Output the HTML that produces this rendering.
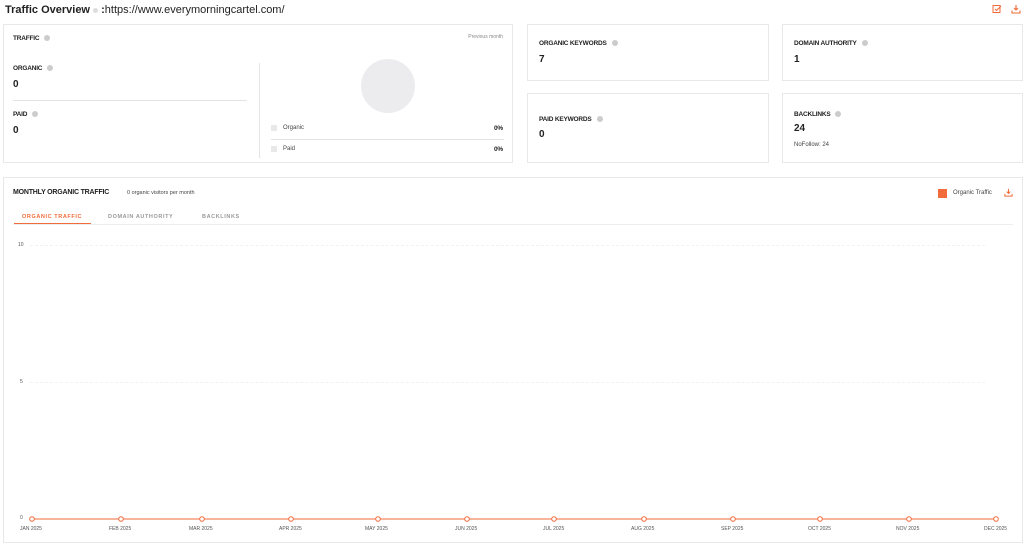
<!DOCTYPE html>
<html><head><style>
*{box-sizing:border-box;margin:0;padding:0}
body{width:1024px;height:551px;background:#fff;font-family:"Liberation Sans",sans-serif;color:#222;position:relative;overflow:hidden}
.a{position:absolute}
.card{position:absolute;border:1px solid #e8e8e8;background:#fff}
.lbl{position:absolute;font-size:6.5px;font-weight:bold;letter-spacing:-0.2px;color:#222}
.q{display:inline-block;width:6px;height:6px;border-radius:50%;background:#ccc;margin-left:5px;vertical-align:middle}
.val{position:absolute;font-size:10px;font-weight:bold}
.sm{position:absolute;font-size:6px;color:#444}
.ax{position:absolute;font-size:5px;color:#555}
</style></head><body>
<div class="a" style="left:5px;top:4px;font-size:11px"><b>Traffic Overview</b> <span style="display:inline-block;width:5px;height:5px;border-radius:50%;background:#ddd;vertical-align:middle"></span> <b>:</b>https://www.everymorningcartel.com/</div>
<svg class="a" style="left:992px;top:4px" width="10" height="10" viewBox="0 0 10 10" fill="none" stroke="#f26b3a" stroke-width="1"><rect x="1" y="1.5" width="7" height="7"/><path d="M3 5l1.5 1.5L9 2"/></svg>
<svg class="a" style="left:1011px;top:4px" width="10" height="10" viewBox="0 0 10 10" fill="none" stroke="#f26b3a" stroke-width="1.1"><path d="M5 1v5M3 4l2 2 2-2M1 6.5v2.5h8V6.5"/></svg>

<div class="card" style="left:3px;top:24px;width:510px;height:139px">
 <div class="lbl" style="left:9px;top:10px">TRAFFIC<span class="q"></span></div>
 <div class="sm" style="right:9px;top:9px;font-size:5px;color:#888">Previous month</div>
 <div class="lbl" style="left:9px;top:40px">ORGANIC<span class="q"></span></div>
 <div class="val" style="left:9px;top:54px">0</div>
 <div class="a" style="left:9px;top:75px;width:234px;border-top:1px solid #e4e4e4"></div>
 <div class="lbl" style="left:9px;top:86px">PAID<span class="q"></span></div>
 <div class="val" style="left:9px;top:100px">0</div>
 <div class="a" style="left:255px;top:38px;height:95px;border-left:1px solid #e4e4e4"></div>
 <div class="a" style="left:357px;top:34px;width:54px;height:54px;border-radius:50%;background:#ececee"></div>
 <div class="a" style="left:267px;top:100px;width:6px;height:6px;background:#e8e8e8"></div>
 <div class="sm" style="left:279px;top:100px">Organic</div>
 <div class="lbl" style="right:9px;top:100px">0%</div>
 <div class="a" style="left:267px;top:114px;width:233px;border-top:1px solid #e4e4e4"></div>
 <div class="a" style="left:267px;top:121px;width:6px;height:6px;background:#e8e8e8"></div>
 <div class="sm" style="left:279px;top:121px">Paid</div>
 <div class="lbl" style="right:9px;top:121px">0%</div>
</div>

<div class="card" style="left:527px;top:24px;width:242px;height:57px">
 <div class="lbl" style="left:11px;top:15px">ORGANIC KEYWORDS<span class="q"></span></div>
 <div class="val" style="left:11px;top:29px">7</div>
</div>
<div class="card" style="left:782px;top:24px;width:241px;height:57px">
 <div class="lbl" style="left:11px;top:15px">DOMAIN AUTHORITY<span class="q"></span></div>
 <div class="val" style="left:11px;top:29px">1</div>
</div>
<div class="card" style="left:527px;top:93px;width:242px;height:70px">
 <div class="lbl" style="left:11px;top:22px">PAID KEYWORDS<span class="q"></span></div>
 <div class="val" style="left:11px;top:35px">0</div>
</div>
<div class="card" style="left:782px;top:93px;width:241px;height:70px">
 <div class="lbl" style="left:11px;top:17px">BACKLINKS<span class="q"></span></div>
 <div class="val" style="left:11px;top:29px">24</div>
 <div class="sm" style="left:11px;top:48px">NoFollow: 24</div>
</div>

<div class="card" style="left:3px;top:177px;width:1020px;height:366px">
 <div class="lbl" style="left:9px;top:11px;font-size:7px">MONTHLY ORGANIC TRAFFIC</div>
 <div class="sm" style="left:123px;top:12px;font-size:5.5px">0 organic visitors per month</div>
 <div class="a" style="left:934px;top:11px;width:9px;height:9px;background:#f26b3a"></div>
 <div class="sm" style="left:949px;top:12px">Organic Traffic</div>
 <svg class="a" style="left:1000px;top:10px" width="9" height="9" viewBox="0 0 10 10" fill="none" stroke="#f26b3a" stroke-width="1.1"><path d="M5 1v5M3 4l2 2 2-2M1 6.5v2.5h8V6.5"/></svg>
 <div class="a" style="left:18px;top:36px;font-size:5.5px;font-weight:bold;letter-spacing:0.6px;color:#f26b3a">ORGANIC TRAFFIC</div>
 <div class="a" style="left:104px;top:36px;font-size:5.5px;font-weight:bold;letter-spacing:0.6px;color:#999">DOMAIN AUTHORITY</div>
 <div class="a" style="left:198px;top:36px;font-size:5.5px;font-weight:bold;letter-spacing:0.6px;color:#999">BACKLINKS</div>
 <div class="a" style="left:9px;top:46px;width:1000px;border-top:1px solid #eee"></div>
 <div class="a" style="left:10px;top:45px;width:77px;border-top:1px solid #f26b3a"></div>
</div>
<div class="ax" style="left:18px;top:242px">10</div>
<div class="ax" style="left:20px;top:379px">5</div>
<div class="ax" style="left:20px;top:515px">0</div>
<div class="a" style="left:30px;top:245px;width:955px;border-top:1px dashed #f2f2f2"></div>
<div class="a" style="left:30px;top:382px;width:955px;border-top:1px dashed #f2f2f2"></div>
<svg class="a" style="left:0;top:510px" width="1024" height="20">
 <line x1="32" y1="9" x2="996" y2="9" stroke="#f26b3a" stroke-width="1"/>
 <g fill="#fff" stroke="#f26b3a" stroke-width="1">
 <circle cx="32" cy="9" r="2.3"/><circle cx="121" cy="9" r="2.3"/><circle cx="202" cy="9" r="2.3"/><circle cx="291" cy="9" r="2.3"/><circle cx="378" cy="9" r="2.3"/><circle cx="467" cy="9" r="2.3"/><circle cx="554" cy="9" r="2.3"/><circle cx="644" cy="9" r="2.3"/><circle cx="733" cy="9" r="2.3"/><circle cx="820" cy="9" r="2.3"/><circle cx="909" cy="9" r="2.3"/><circle cx="996" cy="9" r="2.3"/>
 </g>
</svg>
<div class="ax" style="left:20px;top:526px">JAN 2025</div>
<div class="ax" style="left:109px;top:526px">FEB 2025</div>
<div class="ax" style="left:189px;top:526px">MAR 2025</div>
<div class="ax" style="left:279px;top:526px">APR 2025</div>
<div class="ax" style="left:365px;top:526px">MAY 2025</div>
<div class="ax" style="left:455px;top:526px">JUN 2025</div>
<div class="ax" style="left:543px;top:526px">JUL 2025</div>
<div class="ax" style="left:631px;top:526px">AUG 2025</div>
<div class="ax" style="left:721px;top:526px">SEP 2025</div>
<div class="ax" style="left:808px;top:526px">OCT 2025</div>
<div class="ax" style="left:896px;top:526px">NOV 2025</div>
<div class="ax" style="left:984px;top:526px">DEC 2025</div>
</body></html>
